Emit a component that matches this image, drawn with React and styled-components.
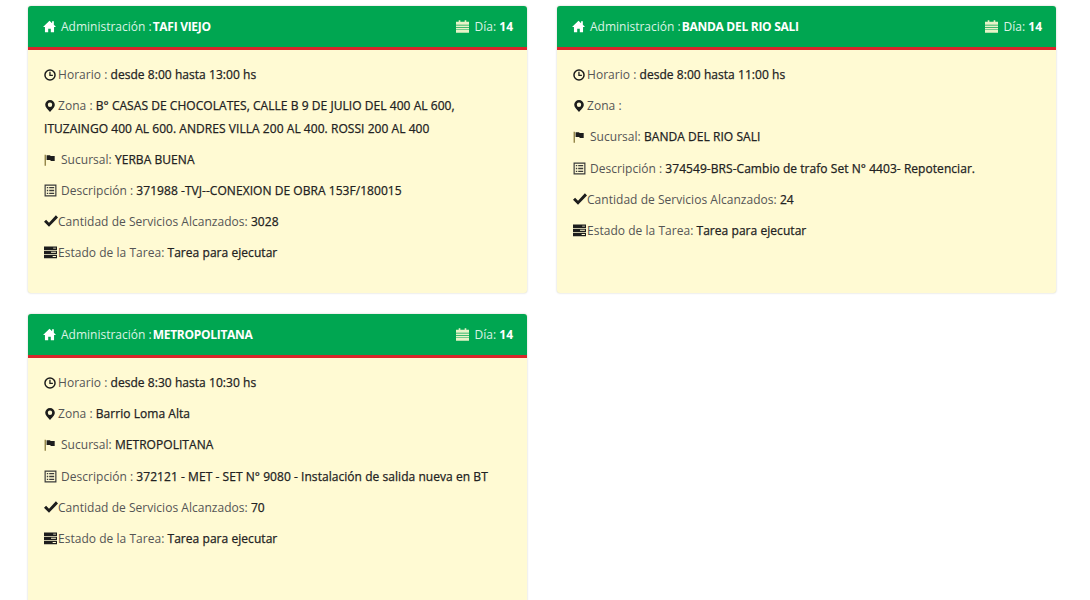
import React from "react";
import styled, { createGlobalStyle } from "styled-components";

const Global = createGlobalStyle`
  html, body { margin: 0; padding: 0; background: #fff; overflow: hidden; height: 600px; }
  body { font-family: "Open Sans", "Noto Sans", sans-serif; font-size: 12px; color: #333; }
`;
const Page = styled.div`
  display: grid;
  grid-template-columns: 499px 499px;
  column-gap: 30px;
  row-gap: 21px;
  padding: 6px 0 0 28px;
  align-items: start;
`;
const Card = styled.section`
  background: #fffad3;
  border-radius: 3px;
  box-shadow: 0 0 2px rgba(60, 60, 40, 0.28);
  height: ${(p) => p.$h}px;
  overflow: hidden;
`;
const Header = styled.header`
  height: 41px;
  background: #00a651;
  border-bottom: 3px solid #d9262b;
  display: flex;
  align-items: center;
  justify-content: space-between;
  padding: 0 14px 0 15px;
  color: #fff;
`;
const HeadPart = styled.div`
  display: flex;
  align-items: center;
  color: #dcf3e5;
`;
const HeadStrong = styled.strong`
  font-weight: 700;
  color: #fff;
  margin-left: ${(p) => (p.$tight ? "1px" : "0")};
  letter-spacing: ${(p) => (p.$tight ? "-0.28px" : "0")};
`;
const Body = styled.div`
  padding: 14px 16px 0;
`;
const Row = styled.p`
  margin: 0 0 8.7px;
  line-height: 22.5px;
  color: #555;
  font-weight: 400;
  letter-spacing: 0.03px;
`;
const Value = styled.span`
  color: #222;
  font-weight: 500;
  font-size: 12px;
  letter-spacing: 0.05px;
  -webkit-text-stroke: 0.25px #222;
`;
const Ico = styled.svg`
  display: inline-block;
  width: ${(p) => p.$s || 12}px;
  height: ${(p) => p.$s || 12}px;
  vertical-align: -2px;
  margin-right: ${(p) => p.$mr ?? 2}px;
  fill: ${(p) => p.$c || "#1d1d1d"};
`;

const Home = () => (
  <Ico viewBox="0 0 12 12" $c="#fff" $s={13} $mr={5}>
    <path d="M6 .6 0 6.400h1.800v5h3V8h2.400v3.400h3v-5H12L10 4.400V1.200H8.400v1.700L6 .6Z" />
  </Ico>
);
const Calendar = () => (
  <Ico viewBox="0 0 12 12" $c="#e8f3c8" $s={13} $mr={6}>
    <path d="M2.500.3h1.500v1.300h4V.3h1.500v1.300H12v2.700H0V1.600h2.500V.3Z" />
    <path d="M0 5h12v6.700H0V5Zm0 1.800v.5h12v-.5H0Zm0 2v.5h12v-.5H0Z" fillRule="evenodd" />
  </Ico>
);
const Clock = () => (
  <Ico viewBox="0 0 12 12">
    <path fillRule="evenodd" d="M6 .2a5.800 5.800 0 1 1 0 11.600A5.800 5.800 0 0 1 6 .2Zm0 1.500a4.300 4.300 0 1 0 0 8.600 4.300 4.300 0 0 0 0-8.600Z" />
    <path d="M5.300 2.800h1.300v3h2.300v1.300H5.300V2.800Z" />
  </Ico>
);
const Pin = () => (
  <Ico viewBox="0 0 12 12" $mr={2} $s={12}>
    <path fillRule="evenodd" d="M6 0a4.800 4.800 0 0 1 4.800 4.800C10.800 7.400 7.800 10 6 12 4.200 10 1.200 7.400 1.200 4.800A4.800 4.800 0 0 1 6 0Zm0 2.600a2.200 2.200 0 1 0 0 4.400 2.200 2.200 0 0 0 0-4.400Z" />
  </Ico>
);
const Flag = () => (
  <Ico viewBox="0 0 12 12" $mr={5}>
    <path d="M.6.800h1.300v11H.6z" fill="#8a7a3a" />
    <path d="M2.600 1.200h3.200l1 .7h3.900v5H7l-1-.9H2.600V1.200Z" />
  </Ico>
);
const List = () => (
  <Ico viewBox="0 0 12 12" $mr={4} $s={13}>
    <path fillRule="evenodd" d="M.5.500h11v11H.5v-11Zm1.100 1.100v8.800h8.800V1.600H1.600Z" fill="#3a3a3a" />
    <path d="M2.600 2.700h1.300V4H2.600zM4.800 2.700h4.600V4H4.800zM2.600 5.300h1.300v1.300H2.600zM4.800 5.300h4.600v1.300H4.800zM2.600 8h1.300v1.300H2.600zM4.800 8h4.600v1.300H4.800z" fill="#3a3a3a" />
  </Ico>
);
const Check = () => (
  <Ico viewBox="0 0 12 12" $s={14} $mr={0}>
    <path d="M4.300 11 0 6.700l1.800-1.800 2.500 2.500L10.200 1 12 2.900 4.300 11Z" />
  </Ico>
);
const Tasks = () => (
  <Ico viewBox="0 0 12 12" $s={13} $mr={1}>
    <path d="M0 .5h12v3.100H0zM0 4.400h12v3.100H0zM0 8.300h12v3.100H0z" />
    <path d="M8.500 1.500h2.500v.9H8.500zM6.500 5.400h4.500v.9H6.500zM8 9.300h3v.9H8z" fill="#fffad3" />
  </Ico>
);

const data = [
  { admin: "TAFI VIEJO", h: 287, horario: "desde 8:00 hasta 13:00 hs", zona: "B° CASAS DE CHOCOLATES, CALLE B 9 DE JULIO DEL 400 AL 600, ITUZAINGO 400 AL 600. ANDRES VILLA 200 AL 400. ROSSI 200 AL 400", suc: "YERBA BUENA", desc: "371988 -TVJ--CONEXION DE OBRA 153F/180015", cant: "3028" },
  { admin: "BANDA DEL RIO SALI", h: 287, horario: "desde 8:00 hasta 11:00 hs", zona: "", suc: "BANDA DEL RIO SALI", desc: "374549-BRS-Cambio de trafo Set N° 4403- Repotenciar.", cant: "24" },
  { admin: "METROPOLITANA", h: 300, horario: "desde 8:30 hasta 10:30 hs", zona: "Barrio Loma Alta", suc: "METROPOLITANA", desc: "372121 - MET - SET N° 9080 - Instalación de salida nueva en BT", cant: "70" },
];

export default function App() {
  return (
    <>
      <Global />
      <Page>
        {data.map((d) => (
          <Card key={d.admin} $h={d.h}>
            <Header>
              <HeadPart><Home />Administración :<HeadStrong $tight>{d.admin}</HeadStrong></HeadPart>
              <HeadPart><Calendar />Día:&nbsp;<HeadStrong>14</HeadStrong></HeadPart>
            </Header>
            <Body>
              <Row><Clock />Horario : <Value>{d.horario}</Value></Row>
              <Row><Pin />Zona : <Value>{d.zona}</Value></Row>
              <Row><Flag />Sucursal: <Value>{d.suc}</Value></Row>
              <Row><List />Descripción : <Value>{d.desc}</Value></Row>
              <Row><Check />Cantidad de Servicios Alcanzados: <Value>{d.cant}</Value></Row>
              <Row><Tasks />Estado de la Tarea: <Value>Tarea para ejecutar</Value></Row>
            </Body>
          </Card>
        ))}
      </Page>
    </>
  );
}
